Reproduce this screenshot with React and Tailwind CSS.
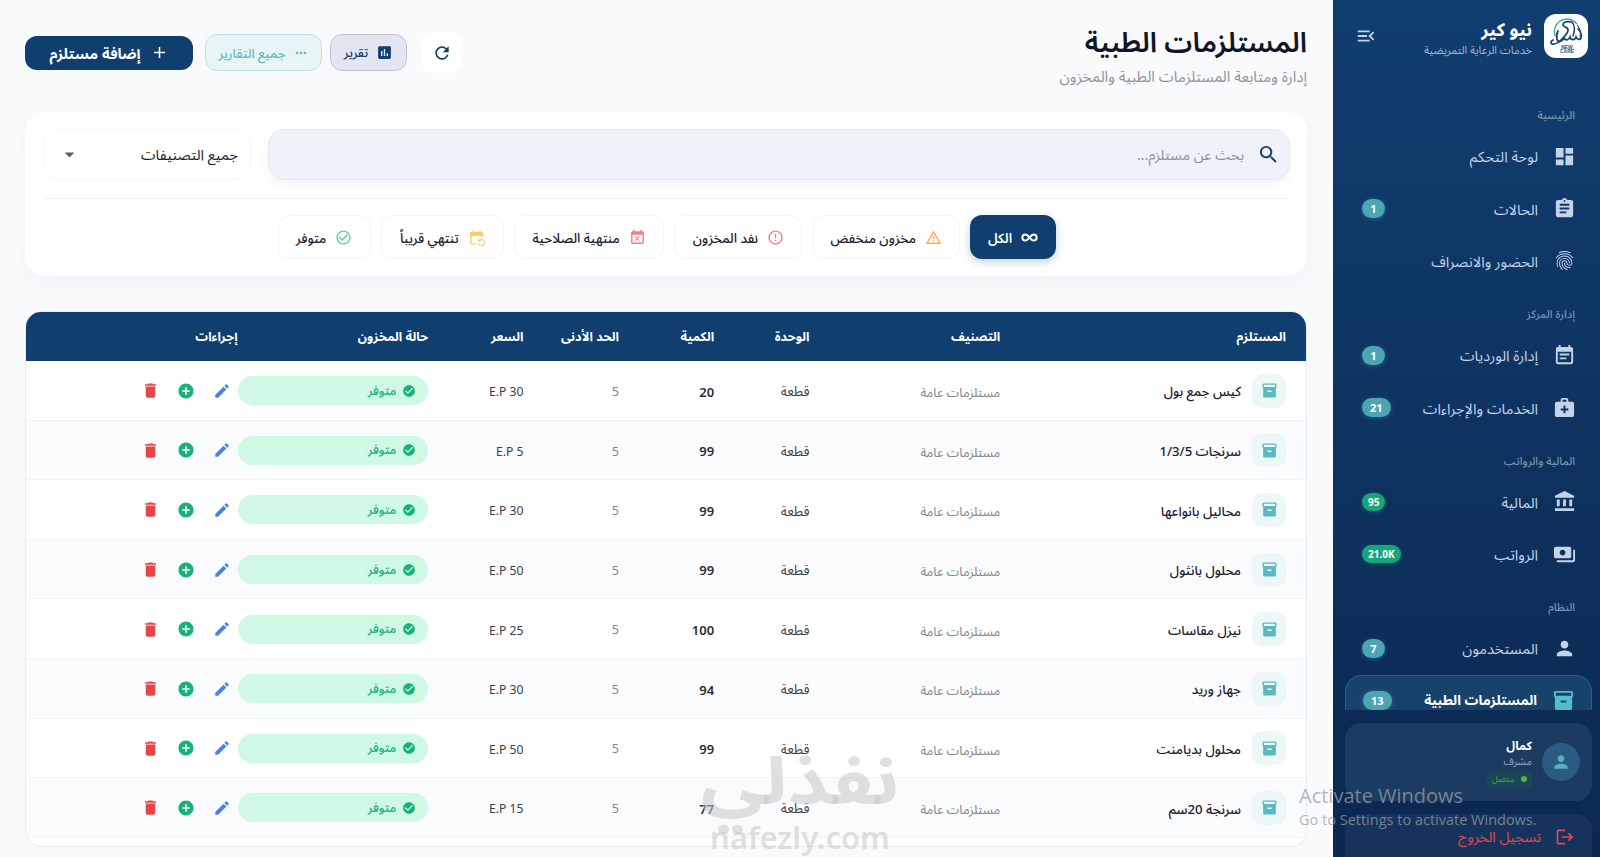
import {
  MdAccountBalance, MdAdd, MdAddCircle, MdArrowDropDown, MdAssignment, MdCheckCircle,
  MdCheckCircleOutline, MdDelete, MdEdit, MdErrorOutline, MdEventBusy, MdEventNote,
  MdEventRepeat, MdDashboard, MdFingerprint, MdInsertChart, MdInventory2, MdLogout,
  MdMedicalServices, MdMenuOpen, MdMoreHoriz, MdOutlineWarningAmber, MdPayments,
  MdPerson, MdRefresh, MdSearch,
} from 'react-icons/md';

const InfinityIcon = ({ className }) => (
  <svg viewBox="0 0 18 18" className={className} fill="none" stroke="currentColor" strokeWidth="2.1" strokeLinecap="round">
    <path d="M9 9C7.6 7.2 6.5 5.7 4.7 5.7a3.3 3.3 0 0 0 0 6.6C6.5 12.300 7.600 10.800 9 9s2.500-3.300 4.300-3.300a3.300 3.300 0 0 1 0 6.600C11.500 12.300 10.400 10.800 9 9Z" />
  </svg>
);

const groups = [
  {
    title: 'الرئيسية',
    items: [
      { icon: MdDashboard, label: 'لوحة التحكم' },
      { icon: MdAssignment, label: 'الحالات', badge: '1' },
      { icon: MdFingerprint, label: 'الحضور والانصراف' },
    ],
  },
  {
    title: 'إدارة المركز',
    items: [
      { icon: MdEventNote, label: 'إدارة الورديات', badge: '1' },
      { icon: MdMedicalServices, label: 'الخدمات والإجراءات', badge: '21' },
    ],
  },
  {
    title: 'المالية والرواتب',
    items: [
      { icon: MdAccountBalance, label: 'المالية', badge: '95', green: true },
      { icon: MdPayments, label: 'الرواتب', badge: '21.0K', green: true },
    ],
  },
  {
    title: 'النظام',
    items: [
      { icon: MdPerson, label: 'المستخدمون', badge: '7' },
      { icon: MdInventory2, label: 'المستلزمات الطبية', badge: '13', active: true },
    ],
  },
];

const filters = [
  { icon: InfinityIcon, label: 'الكل', width: 'w-[86px]', active: true },
  { icon: MdOutlineWarningAmber, label: 'مخزون منخفض', width: 'w-[147px]', color: 'text-[#fbb24c]' },
  { icon: MdErrorOutline, label: 'نفد المخزون', width: 'w-[128px]', color: 'text-[#f27d84]' },
  { icon: MdEventBusy, label: 'منتهية الصلاحية', width: 'w-[150px]', color: 'text-[#f27d84]' },
  { icon: MdEventRepeat, label: 'تنتهي قريباً', width: 'w-[123px]', color: 'text-[#f9d05c]' },
  { icon: MdCheckCircleOutline, label: 'متوفر', width: 'w-[93px]', color: 'text-[#5fd0a0]' },
];

const rows = [
  { name: 'كيس جمع بول', qty: 20, price: 30 },
  { name: 'سرنجات 1/3/5', qty: 99, price: 5 },
  { name: 'محاليل بانواعها', qty: 99, price: 30 },
  { name: 'محلول بانثول', qty: 99, price: 50 },
  { name: 'نيزل مقاسات', qty: 100, price: 25 },
  { name: 'جهاز وريد', qty: 94, price: 30 },
  { name: 'محلول بديامنت', qty: 99, price: 50 },
  { name: 'سرنجة 20سم', qty: 77, price: 15 },
];

const columns = 'grid grid-cols-[3fr_2fr_1fr_1fr_1fr_1fr_2fr_2fr] items-center pr-[20px] pl-[21px]';

const Logo = () => (
  <div className="w-11 h-11 rounded-xl bg-white shrink-0">
    <svg viewBox="0 0 44 44" className="w-full h-full" fill="none">
      <path d="M11 22a13 13 0 0 1 5-15A13 13 0 0 1 33 10" stroke="#4da3a8" strokeWidth="1.4" />
      <path d="M33 11a13 13 0 0 1 3 12" stroke="#1f4e79" strokeWidth="1.1" />
      <path d="M34 15c3 3 4 6 3 9-1 2-4 2-5-1-1 3-5 4-6 0-1 3-4 4-6 1-2 4-6 5-7 1-1-3 0-6 1-8" stroke="#173f6b" strokeWidth="1.7" strokeLinecap="round" />
      <path d="M27 8c-4-1-8 0-8 3 0 2 6 2 5 6-1 3-3 5-6 8s-7 6-10 5c-2-1-1-3 1-4" stroke="#173f6b" strokeWidth="1.7" strokeLinecap="round" />
      <path d="M28 8c3 3 3 9 1 14" stroke="#173f6b" strokeWidth="1.5" strokeLinecap="round" />
      <text x="23" y="34.7" textAnchor="middle" fontSize="5" fontWeight="700" fill="#3c4f6b" fontFamily="Liberation Sans">NEW</text>
      <text x="23" y="39.4" textAnchor="middle" fontSize="5" fontWeight="700" fill="#3c4f6b" fontFamily="Liberation Sans">CARE</text>
    </svg>
  </div>
);

const NavItem = ({ icon: Icon, label, badge, green, active }) => (
  <div
    className={`h-[52.4px] mr-[8px] ml-[12px] flex items-center rounded-2xl ${
      active
        ? 'border border-[#2a6484] bg-[#17436a] pr-[16px] pl-[17px] text-white text-[13.7px] font-bold'
        : 'pr-[16px] pl-[17px] text-[#c3d3e8] text-[14.7px]'
    }`}
  >
    <Icon className={`w-[23px] h-[23px] shrink-0 ${active ? 'text-[#55bccb]' : ''}`} />
    <span className="mr-[15px] whitespace-nowrap">{label}</span>
    {badge && (
      <span
        className={`mr-auto rounded-full text-white font-bold leading-none flex items-center justify-center ${
          green
            ? 'h-[18px] px-[6px] text-[10px] bg-[#16a679] shadow-[0_1px_5px_rgba(22,166,121,0.4)]'
            : 'h-[19px] px-2 min-w-[23px] text-[11px] bg-[#4ba5b3] shadow-[0_1px_5px_rgba(75,165,179,0.4)]'
        }`}
      >
        {badge}
      </span>
    )}
  </div>
);

const Sidebar = () => (
  <aside className="w-[267px] h-full shrink-0 flex flex-col bg-gradient-to-b from-[#103e70] via-[#0e3360] to-[#0a2850]">
    <div className="flex items-start pt-[14px] pr-3 pl-[22px] h-[90px] shrink-0">
      <Logo />
      <div className="mr-3 flex flex-col">
        <span className="text-white text-[18px] font-bold leading-[30px] whitespace-nowrap">نيو كير</span>
        <span className="text-[#a3b6cf] text-[11px] leading-[12px] whitespace-nowrap">خدمات الرعاية التمريضية</span>
      </div>
      <MdMenuOpen className="mr-auto mt-[11px] w-[22px] h-[22px] text-[#c3d3e8]" />
    </div>

    <nav className="h-[620px] shrink-0 overflow-hidden">
      {groups.map((group) => (
        <div key={group.title} className="pb-[1.8px]">
          <div className="h-[40px] pr-[25px] pt-[17px] text-[11.2px] leading-[16px] font-medium text-[#7d93b0]">{group.title}</div>
          {group.items.map((item) => <NavItem key={item.label} {...item} />)}
        </div>
      ))}
    </nav>

    {/* Current user */}
    <div className="mr-[8px] ml-[12px] mt-[13px] h-[78px] shrink-0 rounded-2xl bg-[#1c3b61] flex items-center pr-3">
      <div className="w-[38px] h-[38px] rounded-full bg-[#295c80] flex items-center justify-center">
        <MdPerson className="w-5 h-5 text-[#52b4c2]" />
      </div>
      <div className="mr-[10px] flex flex-col items-start">
        <span className="text-white text-[12px] font-bold leading-[17px]">كمال</span>
        <span className="text-[#93a6bf] text-[10.5px] leading-[14px]">مشرف</span>
        <span className="mt-[3px] h-[17px] w-[46px] rounded bg-[#1b4658] text-[#45a52f] text-[9px] flex items-center justify-center gap-[6px]">
          <span className="w-[6px] h-[6px] rounded-full bg-[#52b53b]" />
          متصل
        </span>
      </div>
    </div>

    <div className="mr-[8px] ml-[12px] mt-[13px] h-[60px] shrink-0 rounded-2xl bg-[#15335c] flex items-start pt-[13px] pr-[17px] text-[#e5484d]">
      <MdLogout className="w-5 h-5" />
      <span className="mr-[14px] text-[14.4px] leading-[20px]">تسجيل الخروج</span>
    </div>
  </aside>
);

const Header = () => (
  <header className="flex h-[112px] pt-[23px]">
    <div>
      <h1 className="text-[28px] leading-[36px] font-semibold text-[#111527]">المستلزمات الطبية</h1>
      <p className="mt-[2px] text-[15px] leading-[30px] text-[#8f9399]">إدارة ومتابعة المستلزمات الطبية والمخزون</p>
    </div>
    <div className="mr-auto h-[59px] flex items-center">
      <button className="w-[41px] h-[41px] rounded-xl bg-white flex items-center justify-center">
        <MdRefresh className="w-[20px] h-[20px] text-[#103e6f]" />
      </button>
      <button className="mr-[14px] w-[77px] h-[37px] rounded-xl border border-[#bcc3d3] bg-[#e1e6f0] flex items-center justify-center gap-2 text-[12.6px] font-medium text-[#103e6f]">
        <MdInsertChart className="w-[17px] h-[17px]" />
        <span className="pt-[2px]">تقرير</span>
      </button>
      <button className="mr-[8px] w-[117px] h-[37px] rounded-xl border border-[#bfe3e4] bg-[#e7f5f6] flex items-center justify-center gap-[7px] text-[13px] font-medium text-[#5dbcbf]">
        <MdMoreHoriz className="w-4 h-4" />
        <span className="pt-[2px]">جميع التقارير</span>
      </button>
      <button className="mr-[12px] w-[168px] h-[34px] rounded-xl bg-[#103e6f] flex items-center justify-center gap-[9px] text-[14.7px] font-bold text-white">
        <MdAdd className="w-[19px] h-[19px]" />
        <span className="pt-px">إضافة مستلزم</span>
      </button>
    </div>
  </header>
);

const FilterCard = () => (
  <section className="h-[164px] rounded-[20px] bg-white shadow-[0_6px_20px_rgba(15,40,80,0.035)] pr-[17px] pl-[18px] pt-[17px]">
    <div className="flex">
      <div className="flex-1 h-[51px] rounded-2xl border border-[#e4e8ef] bg-[#eff2f8] shadow-[0_4px_12px_rgba(16,62,111,0.06)] flex items-center pr-[9px]">
        <MdSearch className="w-[23px] h-[23px] text-[#103e6f]" />
        <span className="mr-[13px] pt-px text-[14.4px] text-[#8c9199]">بحث عن مستلزم...</span>
      </div>
      <div className="mr-[17px] w-[208px] h-[51px] rounded-2xl border border-[#f5f7f9] flex items-center justify-between pr-[12px] pl-[14px]">
        <span className="pt-px text-[14.6px] text-[#1c2030]">جميع التصنيفات</span>
        <MdArrowDropDown className="w-[23px] h-[23px] text-[#606060]" />
      </div>
    </div>
    <div className="mt-[18px] h-px bg-[#eef0f2]" />
    <div className="mt-[16px] flex gap-[10.3px] pr-[234px]">
      {filters.map(({ icon: Icon, label, width, active, color }) => (
        <button
          key={label}
          className={`${width} h-[44px] shrink-0 rounded-xl flex items-center justify-center gap-[9px] text-[13.3px] whitespace-nowrap ${
            active
              ? 'bg-[#103e6f] text-white font-semibold shadow-[0_3px_8px_rgba(16,62,111,0.25)]'
              : 'border border-[#f1f3f5] bg-white text-[#1c2030] font-medium'
          }`}
        >
          <Icon className={`w-[17px] h-[17px] shrink-0 ${color || 'text-white'}`} />
          <span className="pt-[3px]">{label}</span>
        </button>
      ))}
    </div>
  </section>
);

const SupplyTable = () => (
  <section className="mt-[35px] h-[536px] rounded-[16px] border border-[#e6edf3] bg-white overflow-hidden">
    <div className={`${columns} h-[49px] pt-[2px] bg-[#103e6f] text-white text-[12.6px] font-bold`}>
      <span>المستلزم</span>
      <span>التصنيف</span>
      <span>الوحدة</span>
      <span>الكمية</span>
      <span className="whitespace-nowrap">الحد الأدنى</span>
      <span>السعر</span>
      <span>حالة المخزون</span>
      <span>إجراءات</span>
    </div>
    {rows.map((row, i) => (
      <div key={row.name} className={`${columns} h-[59.6px] pt-px border-b border-[#f1f3f6] ${i % 2 ? 'bg-[#fafbfd]' : 'bg-white'}`}>
        <div className="flex items-center">
          <span className="w-[34px] h-[34px] rounded-[10px] bg-[#edf7f8] flex items-center justify-center">
            <MdInventory2 className="w-[17px] h-[17px] text-[#5bbac0]" />
          </span>
          <span className="mr-[11px] pt-[3px] text-[13.2px] font-medium text-[#1c2030]">{row.name}</span>
        </div>
        <span className="pt-[4px] text-[12.7px] text-[#80858c]">مستلزمات عامة</span>
        <span className="pt-[3px] text-[13.3px] text-[#3c4048]">قطعة</span>
        <span className="pt-[3px] text-[13px] font-semibold text-[#2a2e36]">{row.qty}</span>
        <span className="pt-[3px] text-[12.5px] text-[#80858c]">5</span>
        <span dir="ltr" className="pt-[3px] text-right text-[12.2px] text-[#3c4048]">E.P {row.price}</span>
        <span className="h-[29px] rounded-full bg-[#d0f9e5] flex items-center pr-[12px] gap-[6px] text-[12px] font-semibold text-[#27b783]">
          <MdCheckCircle className="w-[14px] h-[14px] text-[#17b27b]" />
          متوفر
        </span>
        <div className="flex items-center pr-[7px] gap-[17.5px]">
          <MdEdit className="w-[18px] h-[18px] text-[#4583ea]" />
          <MdAddCircle className="w-[18px] h-[18px] text-[#17b27b]" />
          <MdDelete className="w-[19px] h-[19px] text-[#e84545]" />
        </div>
      </div>
    ))}
  </section>
);

export default function App() {
  return (
    <div
      dir="rtl"
      className="relative w-[1600px] h-[857px] overflow-hidden flex bg-[#f9fafc] font-['Noto_Sans','Noto_Sans_Arabic','DejaVu_Sans',sans-serif]"
    >
      <Sidebar />
      <main className="flex-1 min-w-0 pl-[25px] pr-[26px]">
        <Header />
        <FilterCard />
        <SupplyTable />
      </main>

      {/* Site watermark */}
      <div className="absolute left-[700px] top-[742px] w-[200px] text-center text-[#c4c6c8]/55 pointer-events-none">
        <div className="text-[66px] leading-[72px] font-bold scale-x-120">نفذلي</div>
        <div dir="ltr" className="mt-[6px] text-[31px] leading-[34px] font-semibold">nafezly.com</div>
      </div>

      {/* Windows activation notice */}
      <div dir="ltr" className="absolute left-[1299px] top-[782px] whitespace-nowrap text-[#9a9fa6]/75 font-['Open_Sans',sans-serif] pointer-events-none">
        <div className="text-[20px] leading-[27px]">Activate Windows</div>
        <div className="text-[14.5px] leading-[22px]">Go to Settings to activate Windows.</div>
      </div>
    </div>
  );
}
